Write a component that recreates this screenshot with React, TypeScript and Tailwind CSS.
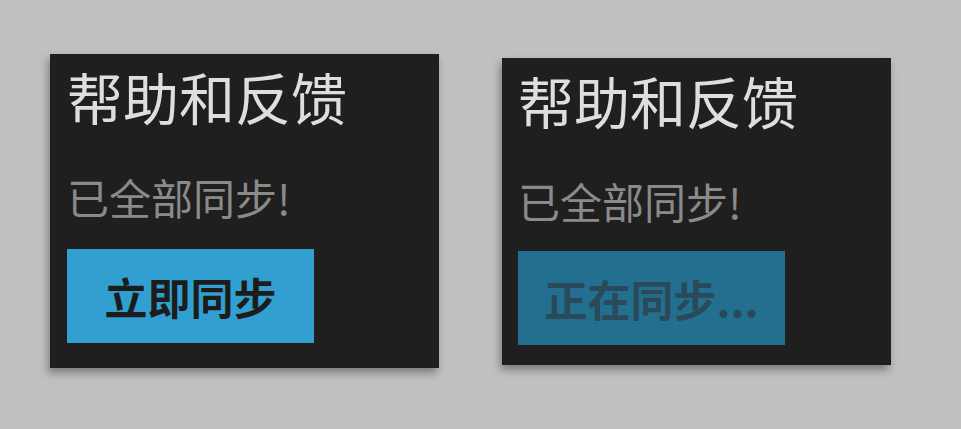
import React from 'react';

const cjk = "font-['Noto_Sans_CJK_SC','Noto_Sans',sans-serif]";

type SyncCardProps = {
  syncing?: boolean;
};

const SyncCard = ({ syncing = false }: SyncCardProps) => {
  return (
    <div
      className={`bg-[#1f1f1f] w-[389px] shadow-[-2px_5px_8px_rgba(0,0,0,0.35)] ${
        syncing ? 'mt-[4px] pt-[14px] pl-[16px] pb-[20px]' : 'pt-[14px] pl-[17px] pb-[25px]'
      } ${cjk}`}
    >
      {/* Heading */}
      <h2 className="text-[56px] leading-none text-[#dedede] font-normal">帮助和反馈</h2>

      {/* Status line */}
      <p className="mt-[52px] text-[42px] leading-none text-[#8a8a8a] font-normal">已全部同步!</p>

      {/* Sync button */}
      {syncing ? (
        <button className="mt-[29px] w-[267px] h-[94px] bg-[#236f8f] text-[#2a4a5a] text-[43px] font-bold leading-none flex items-center justify-center">
          正在同步...
        </button>
      ) : (
        <button className="mt-[31px] w-[247px] h-[94px] bg-[#31a0d0] text-[#1c1c1c] text-[43px] font-bold leading-none flex items-center justify-center">
          立即同步
        </button>
      )}
    </div>
  );
};

export default function App() {
  return (
    <div className="w-[961px] h-[429px] bg-[#c0c0c0] flex items-start gap-[63px] pl-[50px] pt-[54px] overflow-hidden">
      <SyncCard />
      <SyncCard syncing />
    </div>
  );
}
